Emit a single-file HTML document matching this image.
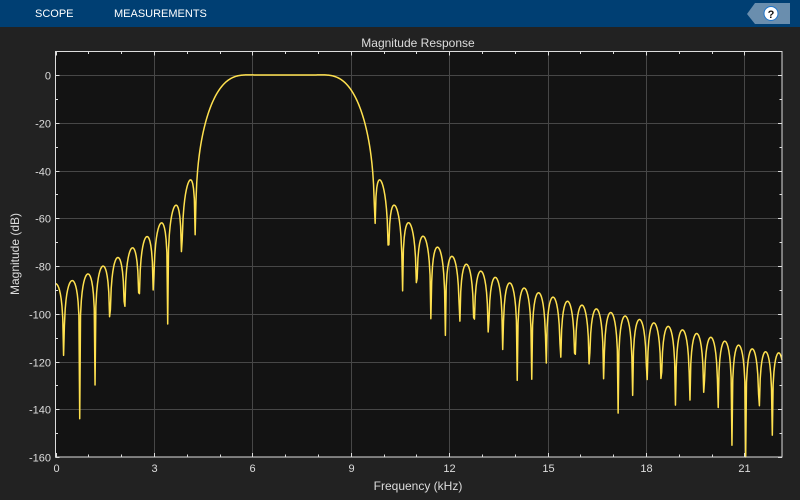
<!DOCTYPE html>
<html><head><meta charset="utf-8"><style>
html,body{margin:0;padding:0;background:#222;width:800px;height:500px;overflow:hidden;font-family:"Liberation Sans",sans-serif}
#bar{position:absolute;left:0;top:0;width:800px;height:27px;background:#003f73}
#bar span{position:absolute;top:8px;color:#fff;font-size:11px;letter-spacing:0}
</style></head><body>
<div id="bar"><span style="left:35px">SCOPE</span><span style="left:114px">MEASUREMENTS</span></div>
<svg width="800" height="500" style="position:absolute;left:0;top:0" xmlns="http://www.w3.org/2000/svg" font-family="Liberation Sans, sans-serif">
<polygon points="747,14 755,3 790,3 790,24 755,24" fill="#6a8eae"/>
<circle cx="771" cy="13.5" r="7" fill="#fff" stroke="#1e73c8" stroke-width="1"/>
<text x="771" y="18" text-anchor="middle" font-size="11" font-weight="bold" fill="#111">?</text>
<text x="418" y="47" text-anchor="middle" font-size="12" fill="#ddd">Magnitude Response</text>
<rect x="55.5" y="51.5" width="726.5" height="405.5" fill="#131313"/>
<g id="grid" stroke="#474747" stroke-width="1"></g>
<path id="curve" fill="none" stroke="#ffe14f" stroke-width="1.5" stroke-linejoin="round"/>
<g id="ticks" stroke="#ddd" stroke-width="1"></g>
<rect x="55.5" y="51.5" width="726.5" height="405.5" fill="none" stroke="#ddd" stroke-width="1"/>
<g id="labels" font-size="11" fill="#ddd"></g>
<text x="418" y="490" text-anchor="middle" font-size="12" fill="#ddd">Frequency (kHz)</text>
<text transform="translate(19,254) rotate(-90)" text-anchor="middle" font-size="12" fill="#ddd">Magnitude (dB)</text>
</svg>
<script>
var L=55.5,R=782,T=51.5,B=457,kx=32.8,y0=75,ky=(457-75)/160;
function X(f){return L+f*kx}function Y(d){return y0-d*ky}
var ns="http://www.w3.org/2000/svg",g=document.getElementById('grid'),tk=document.getElementById('ticks'),lb=document.getElementById('labels');
function el(p,t,a,txt){var e=document.createElementNS(ns,t);for(var k in a)e.setAttribute(k,a[k]);if(txt!=null)e.textContent=txt;p.appendChild(e);}
for(var f=0;f<=21;f++){var x=Math.round(X(f))+0.5;if(f%3==0){if(f>0)el(g,'line',{x1:x,x2:x,y1:T,y2:B});el(lb,'text',{x:x,y:472,'text-anchor':'middle'},f);el(tk,'line',{x1:x,x2:x,y1:B,y2:B-4});el(tk,'line',{x1:x,x2:x,y1:T,y2:T+4});}else{el(tk,'line',{x1:x,x2:x,y1:B,y2:B-2.5});el(tk,'line',{x1:x,x2:x,y1:T,y2:T+2.5});}}
for(var d=0;d>=-160;d-=10){var y=Math.round(Y(d))+0.5;if(d%20==0){if(d>-160)el(g,'line',{x1:L,x2:R,y1:y,y2:y});el(lb,'text',{x:51,y:y+4,'text-anchor':'end'},d);el(tk,'line',{x1:L,x2:L+4,y1:y,y2:y});el(tk,'line',{x1:R,x2:R-4,y1:y,y2:y});}else{el(tk,'line',{x1:L,x2:L+2.5,y1:y,y2:y});el(tk,'line',{x1:R,x2:R-2.5,y1:y,y2:y});}}
// Hann-windowed bandpass FIR
var N=101,fs=44.1,f1=5.0/fs,f2=9.0/fs,h=[],M=(N-1)/2;
function sinc(x){return x==0?1:Math.sin(Math.PI*x)/(Math.PI*x)}
for(var n=0;n<N;n++){var m=n-M;var v=2*f2*sinc(2*f2*m)-2*f1*sinc(2*f1*m);var w=0.5-0.5*Math.cos(2*Math.PI*n/(N-1));h.push(v*w);}
var pts=[],P=900,fmax=(R-L)/kx;
for(var i=0;i<=P;i++){var f=fmax*i/P,om=2*Math.PI*f/fs,re=0,im=0;for(var n=0;n<N;n++){re+=h[n]*Math.cos(om*n);im-=h[n]*Math.sin(om*n);}var db=10*Math.log10(re*re+im*im+1e-30);if(db<-160)db=-160;if(db>0.3)db=0.3;pts.push((i?'L':'M')+X(f).toFixed(2)+','+Y(db).toFixed(2));}
document.getElementById('curve').setAttribute('d',pts.join(''));
</script>
</body></html>
